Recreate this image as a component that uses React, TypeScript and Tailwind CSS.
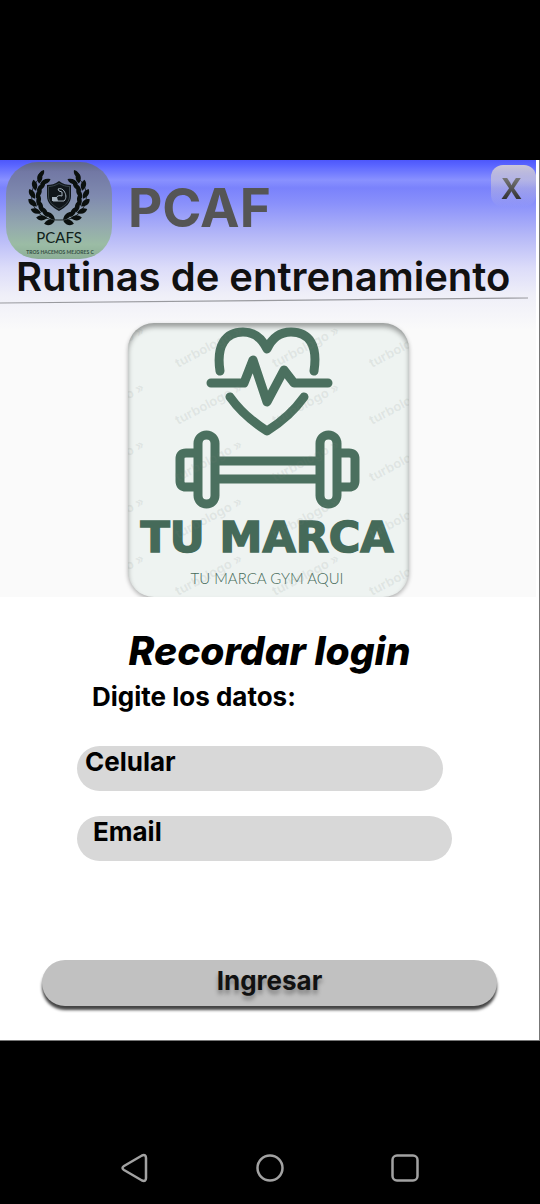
import React from "react";

const LEAF_ANGLES = [10, 29, 48, 67, 86, 105, 124];

function Branch() {
  return (
    <g>
      <path d="M53 58A24 24 0 0 1 34 16" fill="none" stroke="#0b100e" strokeWidth="0.8" />
      {LEAF_ANGLES.map((a) => (
        <g key={a} transform={`rotate(${a} 53 35)`}>
          <path d="M53 58c-2-5-6-7-10-6 1 4 5 7 10 6z" fill="#0b100e" />
          <path d="M53 59c-2 5-6 7-10 5 2-5 5-6 10-5z" fill="#0b100e" />
        </g>
      ))}
      <path d="M32 16c0-4 2-7 6-8 1 4-2 8-6 8z" fill="#0b100e" />
    </g>
  );
}

function Badge() {
  return (
    <svg viewBox="0 0 106 97" className="h-[97px] w-[106px] shrink-0" role="img" aria-label="PCAFS">
      <defs>
        <linearGradient id="badge" x1="0" y1="0" x2="0" y2="1">
          <stop offset="0" stopColor="#5f6688" />
          <stop offset="0.1" stopColor="#7278a4" />
          <stop offset="0.35" stopColor="#7f8aaf" />
          <stop offset="0.65" stopColor="#93a8ae" />
          <stop offset="0.85" stopColor="#9bbca5" />
          <stop offset="1" stopColor="#8cae96" />
        </linearGradient>
        <clipPath id="badgeShape">
          <rect width="106" height="97" rx="32" />
        </clipPath>
      </defs>
      <g clipPath="url(#badgeShape)">
        <rect width="106" height="97" fill="url(#badge)" />
        <Branch />
        <g transform="translate(106 0) scale(-1 1)">
          <Branch />
        </g>
        <path d="M53 19c4 3 8 4 12 4v11c0 7-5 11-12 15-7-4-12-8-12-15V23c4 0 8-1 12-4z" fill="#10161a" />
        <path d="M53 21.500c4 2 7 3 10.500 3V34c0 6-4.500 9.500-10.500 13-6-3.500-10.500-7-10.500-13v-9.500c3.500 0 6.500-1 10.500-3z" fill="none" stroke="#56646c" strokeWidth="0.6" />
        <path d="M47 39h11c3-3 2-7 0-10-1-2-4-3-6-2l1 2 3 1v4c-3-1-5 0-6 2h-3z" fill="none" stroke="#a3b0bc" strokeWidth="1" />
        <path d="M46 35h5l1 4h-6z" fill="#a3b0bc" />
        <text x="53" y="81" textAnchor="middle" fontSize="15" className="font-['Lato']" fill="#10211a">PCAFS</text>
        <text x="54" y="92" textAnchor="middle" fontSize="5" className="font-['Lato'] font-bold" fill="#365044">TROS HACEMOS MEJORES C</text>
      </g>
    </svg>
  );
}

const MARK_ROWS = [45, 102, 159, 216, 273];
const MARK_COLUMNS = [-48, 50, 147, 244];

function BrandArt() {
  return (
    <svg viewBox="0 0 281 274" className="block h-[274px] w-[281px]" role="img" aria-label="Tu marca">
      <g fill="none" stroke="#4b705f" strokeWidth="9" strokeLinecap="round" strokeLinejoin="round">
        <path d="M92 48C88 22 98 9 115 9c11 0 19 6 24 17 5-11 13-17 24-17 18 0 27 13 23 39" />
        <path d="M83 60h33l9-23 14 42 17-32 10 13h34" />
        <path d="M102 74c10 14 21 24 37 34 16-10 27-20 37-34" />
        <rect x="70" y="112" width="17" height="69" rx="8.500" />
        <rect x="192" y="112" width="17" height="69" rx="8.500" />
        <path d="M70 130H58q-6 0-6 6v22q0 6 6 6h12M209 130h12q6 0 6 6v22q0 6-6 6h-12M87 138h105M87 156h105" strokeLinecap="butt" />
      </g>
      <text x="139" y="229" textAnchor="middle" fontSize="43" className="font-['DejaVu_Sans'] font-bold" fill="#456a59" stroke="#456a59" strokeWidth="1.500">TU MARCA</text>
      <text x="139" y="261" textAnchor="middle" fontSize="15" className="font-['Lato'] font-light" fill="#456a59">TU MARCA GYM AQUI</text>
      <g fill="#78827c" fillOpacity="0.12" fontSize="13" className="font-['Inter'] font-bold">
        {MARK_ROWS.map((y) =>
          MARK_COLUMNS.map((x) => (
            <text key={`${x}-${y}`} transform={`translate(${x} ${y}) rotate(-28)`}>turbologo »</text>
          )),
        )}
      </g>
    </svg>
  );
}

function Field({ label, type, className }: { label: string; type: string; className: string }) {
  return (
    <label className={`flex h-[45px] items-start overflow-hidden rounded-full bg-[#d8d8d8] text-[26px] leading-8 font-bold ${className}`}>
      <span>{label}</span>
      <input type={type} className="h-full min-w-0 flex-1 bg-transparent px-3 text-xl font-normal outline-none" />
    </label>
  );
}

export default function App() {
  return (
    <div className="flex min-h-screen flex-col bg-black pt-40 font-['Inter',sans-serif] text-black">
      <main className="border-r border-b border-[#777] bg-white">
        <div className="mr-[3px] bg-[#fafafa] bg-[linear-gradient(to_bottom,#4d57fb_0px,#5964ff_5px,#8991ff_20px,#7a82fc_28px,#8990fb_43px,#b4b7f7_75px,#dcdcf9_108px,#efeff8_135px,#fafafa_170px)]">
          <header>
            <div className="flex items-start pt-[2px] pl-[6px]">
              <Badge />
              <h1 className="mt-4 ml-4 flex-1 text-[53px] leading-[60px] font-bold text-[#555]">PCAF</h1>
              <button type="button" className="mt-[3px] h-[42px] w-[45px] rounded-xl bg-linear-to-b from-[#cbc7d7] to-[#cbc7d7]/0 pt-1 pr-1 text-[29px] leading-none font-bold">
                <span className="bg-linear-to-b from-[#777] from-20% to-[#333] to-80% bg-clip-text text-transparent">X</span>
              </button>
            </div>
            <h2 className="-mt-1 pl-4 text-[40px] leading-[44px] font-semibold whitespace-nowrap text-[#111]">Rutinas de entrenamiento</h2>
            <svg viewBox="0 0 528 6" preserveAspectRatio="none" className="block h-[6px] w-full overflow-visible pr-2">
              <path d="M0 4L528 -1" stroke="#999a9f" strokeWidth="1.200" />
            </svg>
          </header>
          <div className="flex justify-center overflow-hidden pt-[18px]">
            <div className="overflow-hidden rounded-[26px] bg-[#eef3f1] shadow-[inset_0_4px_5px_rgba(0,0,0,0.35),0_2px_4px_rgba(0,0,0,0.3)]">
              <BrandArt />
            </div>
          </div>
        </div>
        <form className="flex flex-col pt-7 pb-[34px]" onSubmit={(e) => e.preventDefault()}>
          <h3 className="text-center text-[39px] leading-[52px] font-extrabold italic">Recordar login</h3>
          <p className="pl-[92px] text-[26px] leading-10 font-bold">Digite los datos:</p>
          <div className="mt-[29px] mr-[87px] ml-[77px] flex flex-col gap-[25px]">
            <Field label="Celular" type="tel" className="mr-[9px] pl-2" />
            <Field label="Email" type="email" className="pl-4" />
          </div>
          <button type="submit" className="mx-[42px] mt-[99px] h-[46px] rounded-full bg-[#c1c1c1] pb-1 text-[26px] leading-none font-bold text-[#111] shadow-[0_4px_3px_#444] text-shadow-[0_4px_4px_rgba(0,0,0,0.35)]">
            Ingresar
          </button>
        </form>
      </main>
      <nav className="mt-auto flex items-center justify-center gap-[107px] pb-[21px] text-[#a2a2a2]">
        <button type="button" aria-label="Atrás">
          <svg viewBox="0 0 28 30" className="h-[30px] w-7" fill="none" stroke="currentColor" strokeWidth="2.500" strokeLinejoin="round">
            <path d="M3 13L21 2.500Q25 1 25 5V25Q25 29 21 27.500L3 17Q0 15 3 13Z" />
          </svg>
        </button>
        <button type="button" aria-label="Inicio">
          <svg viewBox="0 0 28 28" className="size-7" fill="none" stroke="currentColor" strokeWidth="2.500">
            <circle cx="14" cy="14" r="12.500" />
          </svg>
        </button>
        <button type="button" aria-label="Recientes">
          <svg viewBox="0 0 28 28" className="size-7" fill="none" stroke="currentColor" strokeWidth="2.500">
            <rect x="1.500" y="1.500" width="25" height="25" rx="4.500" />
          </svg>
        </button>
      </nav>
    </div>
  );
}
